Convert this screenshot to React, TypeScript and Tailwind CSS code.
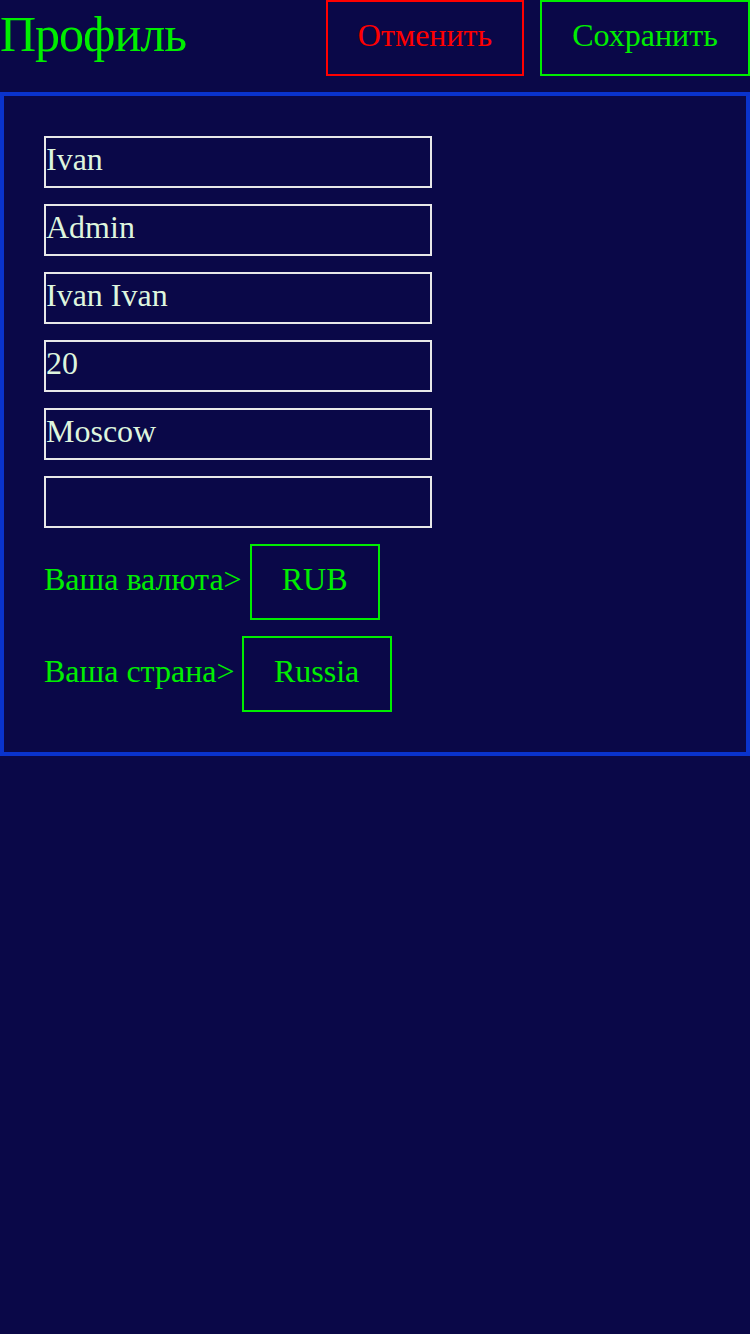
import React from 'react';

const fields = ['Ivan', 'Admin', 'Ivan Ivan', '20', 'Moscow', ''];

const App: React.FC = () => (
    <div className="min-h-[1334px] w-[750px] bg-[#0a0848] font-['Liberation_Serif',serif]">
        <div className="flex h-[92px] items-start">
            <h1 className="mt-[6px] text-[50px] leading-[56px] text-[#00ee00] tracking-[-1px]">Профиль</h1>
            <div className="ml-auto flex gap-4">
                <button className="h-[76px] w-[198px] border-2 border-[#ff0000] pb-[6px] text-[32px] text-[#ff0000]">Отменить</button>
                <button className="h-[76px] w-[210px] border-2 border-[#00ee00] pb-[6px] text-[32px] text-[#00ee00]">Сохранить</button>
            </div>
        </div>
        <div className="border-4 border-[#0a33cc] p-10">
            <div className="flex flex-col gap-4">
                {fields.map((value, index) => (
                    <input
                        key={index}
                        defaultValue={value}
                        className="h-[52px] w-[388px] border-2 border-[#e8e8e8] bg-transparent px-0 pb-[6px] text-[32px] text-[#def5de] outline-none"
                    />
                ))}
            </div>
            <div className="mt-4 flex items-center">
                <span className="mb-[6px] text-[32px] text-[#00ee00]">Ваша валюта&gt;</span>
                <button className="ml-[8px] h-[76px] w-[130px] border-2 border-[#00ee00] pb-[6px] text-[32px] text-[#00ee00]">RUB</button>
            </div>
            <div className="mt-4 flex items-center">
                <span className="mb-[6px] text-[32px] text-[#00ee00]">Ваша страна&gt;</span>
                <button className="ml-[7px] h-[76px] w-[150px] border-2 border-[#00ee00] pb-[6px] text-[32px] text-[#00ee00]">Russia</button>
            </div>
        </div>
    </div>
);

export default App;
